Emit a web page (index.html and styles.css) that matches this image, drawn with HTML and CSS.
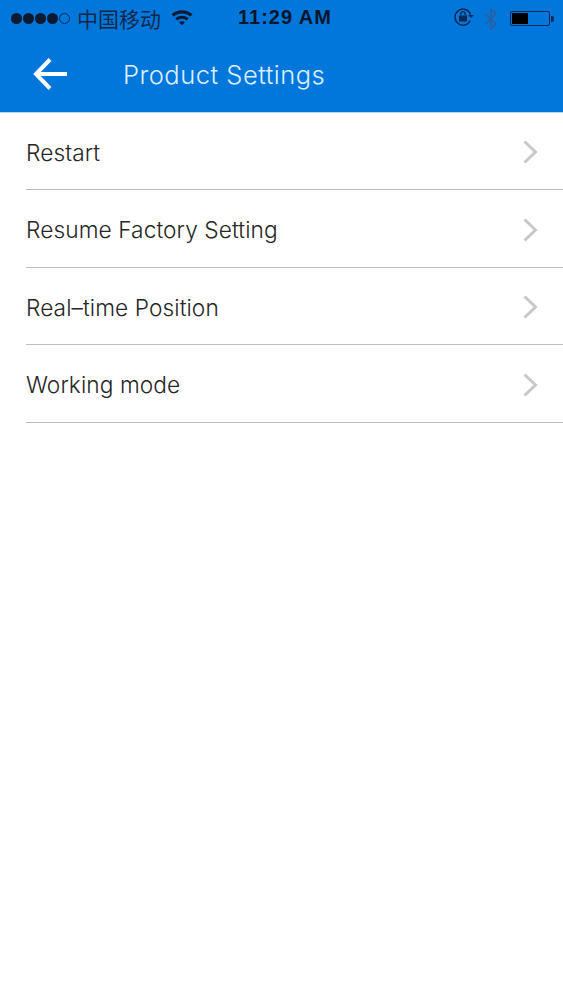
FILE: index.html
```html
<!DOCTYPE html>
<html lang="en">
<head>
	<meta charset="UTF-8">
	<title>Product Settings</title>
	<link rel="stylesheet" href="styles.css">
</head>
<body>

<div class="top">
	<div class="status">
		<div class="status-left">
			<div class="dots">
				<i class="dot"></i><i class="dot"></i><i class="dot"></i><i class="dot"></i><i class="dot empty"></i>
			</div>
			<span class="carrier">中国移动</span>
			<svg class="wifi" width="24" height="18" viewBox="0 0 24 18">
				<path d="M1.5 6.2 C7.5 .8 16.5 .8 22.5 6.2 L20.3 8.6 C15.5 4.5 8.5 4.5 3.7 8.6 Z" fill="#0a1a30"/>
				<path d="M5.3 10.2 C9.3 6.9 14.7 6.9 18.7 10.2 L16.6 12.4 C13.8 10.2 10.2 10.2 7.4 12.4 Z" fill="#0a1a30"/>
				<path d="M9.1 14.2 C10.9 12.9 13.1 12.9 14.9 14.2 L12 17.2 Z" fill="#0a1a30"/>
			</svg>
		</div>
		<div class="time">11:29 AM</div>
		<div class="status-right">
			<svg class="lock" width="22" height="20" viewBox="0 0 22 20">
				<path d="M17.3 13.5 A8 8 0 1 1 17.6 7.5" fill="none" stroke="#0a2a55" stroke-width="1.5"/>
				<path d="M15 8 L21 8 L18 11 Z" fill="#0a2a55"/>
				<rect x="6" y="8.5" width="8" height="6" fill="#0a2a55"/>
				<path d="M7.8 8.5 V6.8 A2.2 2.2 0 0 1 12.2 6.8 V8.5" fill="none" stroke="#0a2a55" stroke-width="1.3"/>
			</svg>
			<svg class="bt" width="14" height="22" viewBox="0 0 14 22">
				<path d="M1.5 6 L12 16 L7 21 V1 L12 6 L1.5 16" fill="none" stroke="#2a5f9e" stroke-width="1.6"/>
			</svg>
			<div class="battery">
				<div class="battery-body"><div class="battery-level"></div></div>
				<div class="battery-tip"></div>
			</div>
		</div>
	</div>
	<div class="nav">
		<svg class="back" width="36" height="34" viewBox="0 0 36 34">
			<path d="M17 2.5 L3 17 L17 31.5 M3 17 H34" fill="none" stroke="#fff" stroke-width="4"/>
		</svg>
		<div class="nav-title">Product Settings</div>
	</div>
</div>

<div class="list">
	<div class="row">
		<span class="row-label">Restart</span>
		<svg class="chev" width="17" height="26" viewBox="0 0 17 26"><path d="M2.5 2.5 L13.5 13 L2.5 23.5" fill="none" stroke="#c8c8c8" stroke-width="3"/></svg>
	</div>
	<div class="row">
		<span class="row-label">Resume Factory Setting</span>
		<svg class="chev" width="17" height="26" viewBox="0 0 17 26"><path d="M2.5 2.5 L13.5 13 L2.5 23.5" fill="none" stroke="#c8c8c8" stroke-width="3"/></svg>
	</div>
	<div class="row">
		<span class="row-label">Real–time Position</span>
		<svg class="chev" width="17" height="26" viewBox="0 0 17 26"><path d="M2.5 2.5 L13.5 13 L2.5 23.5" fill="none" stroke="#c8c8c8" stroke-width="3"/></svg>
	</div>
	<div class="row">
		<span class="row-label">Working mode</span>
		<svg class="chev" width="17" height="26" viewBox="0 0 17 26"><path d="M2.5 2.5 L13.5 13 L2.5 23.5" fill="none" stroke="#c8c8c8" stroke-width="3"/></svg>
	</div>
</div>

</body>
</html>
```
FILE: styles.css
```css
html, body {
	margin: 0;
	height: 100%;
	background: #fff;
	font-family: "Inter", "Noto Sans CJK SC", sans-serif;
}

.top {
	height: 111.5px;
	background: #0277db;
	border-bottom: 1px solid #b9d8f2;
}

.status {
	height: 37px;
	display: flex;
	align-items: center;
	justify-content: space-between;
	padding: 0 9px 0 11px;
	color: #0a1a30;
	position: relative;
}

.status-left {
	display: flex;
	align-items: center;
}

.dots {
	display: flex;
	gap: 1px;
	margin-right: 7px;
}

.dot {
	width: 11px;
	height: 11px;
	border-radius: 50%;
	background: #0a1a30;
	box-sizing: border-box;
}

.dot.empty {
	background: none;
	border: 1px solid #0a2a55;
}

.carrier {
	font-family: "Noto Sans CJK SC", sans-serif;
	font-size: 21px;
	color: #10294a;
	margin: -2px 9px 0 0;
}

.wifi {
	margin-top: -3px;
}

.time {
	position: absolute;
	left: 238px;
	top: 6px;
	font-family: "Liberation Sans", sans-serif;
	font-size: 20px;
	font-weight: bold;
	letter-spacing: 1px;
	color: #06152a;
}

.status-right {
	display: flex;
	align-items: center;
}

.lock {
	margin: -3px 9px 0 0;
}

.bt {
	margin-right: 12px;
}

.battery {
	display: flex;
	align-items: center;
}

.battery-body {
	width: 36px;
	height: 11px;
	border: 1.5px solid #0a2a55;
	border-radius: 2px;
	padding: 1px;
}

.battery-level {
	width: 16px;
	height: 100%;
	background: #000;
}

.battery-tip {
	width: 3px;
	height: 6px;
	background: #0a2a55;
	margin-left: 1px;
	border-radius: 0 2px 2px 0;
}

.nav {
	height: 75px;
	display: flex;
	align-items: center;
}

.back {
	margin: -1px 0 0 33px;
}

.nav-title {
	margin-left: 54px;
	font-size: 25.5px;
	font-weight: 300;
	color: #dcefff;
	letter-spacing: .5px;
}

.list {
	padding-left: 26px;
}

.row {
	height: 73.5px;
	padding: 3px 24px 0 0;
	border-bottom: 1px solid #bdbdbd;
	display: flex;
	align-items: center;
	justify-content: space-between;
}

.row-label {
	font-size: 22.7px;
	font-weight: 300;
	letter-spacing: .08px;
	color: #262626;
}
```
